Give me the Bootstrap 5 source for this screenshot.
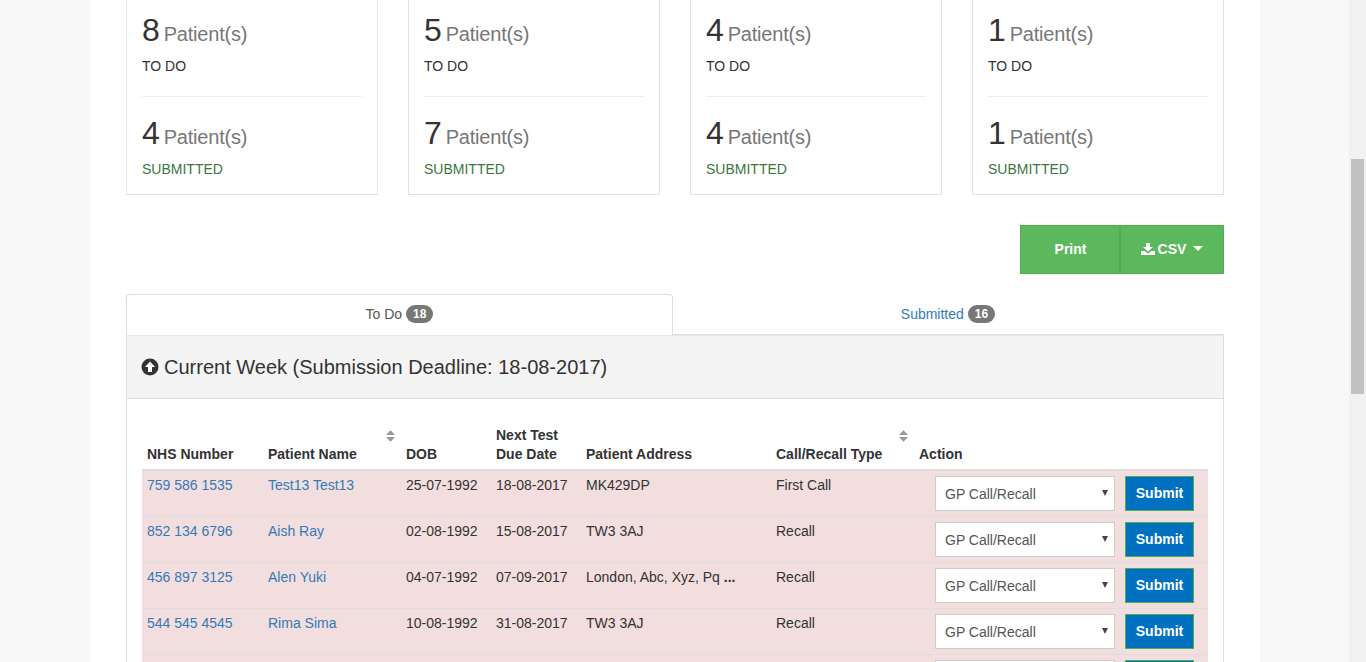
<!DOCTYPE html>
<html lang="en">
<head>
  <meta charset="UTF-8">
  <meta name="viewport" content="width=device-width, initial-scale=1.0">
  <title>Patient Recall</title>
  <link href="https://cdn.jsdelivr.net/npm/bootstrap@5.3.1/dist/css/bootstrap.min.css" rel="stylesheet">
  <style>
    html, body { height: 662px; overflow: hidden; }
    body { background-color: #f8f8f8; font-family: "Liberation Sans", Arial, sans-serif; font-size: 14px; color: #333; line-height: 20px; }
    a { color: #337ab7; text-decoration: none; }

    .page-area { width: 1349px; height: 662px; overflow: hidden; }
    .page-sheet { width: 1170px; height: 662px; margin-left: 90px; padding: 0 36px; background: #fff; overflow: hidden; }

    .fake-scroll { width: 17px; height: 662px; background: #f1f1f1; padding: 0 2px; }
    .fake-thumb { height: 235px; margin-top: 159px; background: #c1c1c1; }

    .stat-row { gap: 30px; }
    .stat-box { width: 252px; height: 195px; border: 1px solid #e3e3e3; border-top: 0; padding: 0 15px; }
    .stat-num { font-size: 32px; line-height: 33px; }
    .stat-unit { font-size: 20px; color: #777; letter-spacing: -0.2px; }
    .stat-first { padding-top: 14px; height: 97px; border-bottom: 1px solid #eee; }
    .stat-second { padding-top: 20px; }
    .stat-label { margin-top: 9px; }
    .stat-green { color: #3c763d; }

    .export-bar { margin-top: 30px; }
    .export-btn { height: 49px; padding: 0 0 2px; background: #5cb85c; border: 1px solid #4cae4c; border-radius: 0; color: #fff; font-weight: 700; font-size: 14px; }
    .export-print { width: 99px; padding-left: 1px; border-right-width: 0; }
    .export-csv { width: 105px; border-left-width: 2px; }
    .export-icon { margin-right: 3px; }
    .export-caret { width: 0; height: 0; border-left: 5px solid transparent; border-right: 5px solid transparent; border-top: 5px solid #fff; margin-left: 7px; }

    .tab-strip { margin-top: 20px; height: 41px; }
    .tab-item { height: 41px; display: flex; align-items: center; justify-content: center; gap: 4px; border-bottom: 1px solid #ddd; }
    .tab-on { width: 547px; border: 1px solid #ddd; border-bottom: 0; border-radius: 4px 4px 0 0; color: #555; padding-bottom: 2px; }
    .tab-off { width: 551px; padding-right: 1px; }
    .count-pill { background: #777; color: #fff; font-size: 12px; font-weight: 700; line-height: 12px; padding: 3px 7px; border-radius: 10px; }

    .week-panel { border: 1px solid #ddd; border-top: 0; }
    .week-head { height: 64px; background: #f4f4f4; border-top: 1px solid #e6e6e6; border-bottom: 1px solid #ddd; padding-left: 14px; gap: 5px; font-size: 20px; }
    .week-body { padding: 22px 15px 0; }

    .due-table { table-layout: fixed; width: 1066px; border-collapse: collapse; }
    .due-table th { position: relative; padding: 5px; line-height: 19px; font-weight: 700; vertical-align: bottom; border-bottom: 2px solid #ddd; }
    .due-table td { padding: 4px 5px 5px; height: 46px; background: #f2dede; border-top: 1px solid #ddd; vertical-align: top; }
    .due-table td.act-cell { padding-top: 5px; }
    .c-nhs { width: 121px; }
    .c-name { width: 138px; }
    .c-date { width: 90px; }
    .c-addr { width: 190px; }
    .c-type { width: 143px; }
    .c-act { width: 294px; }
    .sort-mark { position: absolute; right: 6px; top: 9px; }
    .row-actions { gap: 10px; padding-right: 9px; }
    .gp-select { width: 180px; height: 35px; padding: 5px 9px; border: 1px solid #ccc; background: #fff; color: #555; line-height: 25px; position: relative; }
    .gp-arrow { position: absolute; right: 6px; top: 13px; width: 0; height: 0; border-left: 3px solid transparent; border-right: 3px solid transparent; border-top: 6px solid #444; }
    .submit-btn { width: 69px; height: 35px; padding: 0 0 1px; background: #0070c0; border: 1px solid #4cae4c; border-radius: 0; color: #fff; font-weight: 700; font-size: 14px; }
    .addr-dots { font-weight: 700; }
  </style>
</head>
<body>
  <div class="d-flex">
    <div class="page-area">
      <div class="page-sheet">
        <!-- Stat boxes -->
        <div class="d-flex stat-row">
          <div class="stat-box">
            <div class="stat-first"><div><span class="stat-num">8</span> <span class="stat-unit">Patient(s)</span></div><div class="stat-label">TO DO</div></div>
            <div class="stat-second"><div><span class="stat-num">4</span> <span class="stat-unit">Patient(s)</span></div><div class="stat-label stat-green">SUBMITTED</div></div>
          </div>
          <div class="stat-box">
            <div class="stat-first"><div><span class="stat-num">5</span> <span class="stat-unit">Patient(s)</span></div><div class="stat-label">TO DO</div></div>
            <div class="stat-second"><div><span class="stat-num">7</span> <span class="stat-unit">Patient(s)</span></div><div class="stat-label stat-green">SUBMITTED</div></div>
          </div>
          <div class="stat-box">
            <div class="stat-first"><div><span class="stat-num">4</span> <span class="stat-unit">Patient(s)</span></div><div class="stat-label">TO DO</div></div>
            <div class="stat-second"><div><span class="stat-num">4</span> <span class="stat-unit">Patient(s)</span></div><div class="stat-label stat-green">SUBMITTED</div></div>
          </div>
          <div class="stat-box">
            <div class="stat-first"><div><span class="stat-num">1</span> <span class="stat-unit">Patient(s)</span></div><div class="stat-label">TO DO</div></div>
            <div class="stat-second"><div><span class="stat-num">1</span> <span class="stat-unit">Patient(s)</span></div><div class="stat-label stat-green">SUBMITTED</div></div>
          </div>
        </div>

        <!-- Export buttons -->
        <div class="d-flex justify-content-end export-bar">
          <button class="export-btn export-print" type="button">Print</button>
          <button class="export-btn export-csv d-flex align-items-center justify-content-center" type="button">
            <svg class="export-icon" width="14" height="12" viewBox="0 0 14 12"><path fill="#fff" d="M5 0h4v4h3L7 8.500 2 4h3zM0 8h3.500L7 10.500 10.500 8H14v4H0z"/></svg>CSV<span class="export-caret"></span>
          </button>
        </div>

        <!-- Tabs -->
        <div class="d-flex tab-strip">
          <div class="tab-item tab-on">To Do <span class="count-pill">18</span></div>
          <div class="tab-item tab-off"><a href="#">Submitted</a> <span class="count-pill">16</span></div>
        </div>

        <div class="week-panel">
          <div class="week-head d-flex align-items-center">
            <svg width="18" height="18" viewBox="0 0 18 18"><circle cx="9" cy="9" r="8.500" fill="#333"/><path fill="#fff" d="M9 3.500 14 9h-3v5H7V9H4z"/></svg>
            Current Week (Submission Deadline: 18-08-2017)
          </div>
          <div class="week-body">
            <table class="due-table">
              <thead>
                <tr>
                  <th class="c-nhs">NHS Number</th>
                  <th class="c-name">Patient Name
                    <svg class="sort-mark" width="9" height="12" viewBox="0 0 10 13"><path fill="#999" d="M5 0l5 5.500H0zM0 7.500h10L5 13z"/></svg>
                  </th>
                  <th class="c-date">DOB</th>
                  <th class="c-date">Next Test<br>Due Date</th>
                  <th class="c-addr">Patient Address</th>
                  <th class="c-type">Call/Recall Type
                    <svg class="sort-mark" width="9" height="12" viewBox="0 0 10 13"><path fill="#999" d="M5 0l5 5.500H0zM0 7.500h10L5 13z"/></svg>
                  </th>
                  <th class="c-act">Action</th>
                </tr>
              </thead>
              <tbody>
                <tr>
                  <td><a href="#">759 586 1535</a></td><td><a href="#">Test13 Test13</a></td><td>25-07-1992</td><td>18-08-2017</td><td>MK429DP</td><td>First Call</td>
                  <td class="act-cell"><div class="d-flex justify-content-end row-actions"><div class="gp-select">GP Call/Recall<span class="gp-arrow"></span></div><button class="submit-btn" type="button">Submit</button></div></td>
                </tr>
                <tr>
                  <td><a href="#">852 134 6796</a></td><td><a href="#">Aish Ray</a></td><td>02-08-1992</td><td>15-08-2017</td><td>TW3 3AJ</td><td>Recall</td>
                  <td class="act-cell"><div class="d-flex justify-content-end row-actions"><div class="gp-select">GP Call/Recall<span class="gp-arrow"></span></div><button class="submit-btn" type="button">Submit</button></div></td>
                </tr>
                <tr>
                  <td><a href="#">456 897 3125</a></td><td><a href="#">Alen Yuki</a></td><td>04-07-1992</td><td>07-09-2017</td><td>London, Abc, Xyz, Pq <span class="addr-dots">...</span></td><td>Recall</td>
                  <td class="act-cell"><div class="d-flex justify-content-end row-actions"><div class="gp-select">GP Call/Recall<span class="gp-arrow"></span></div><button class="submit-btn" type="button">Submit</button></div></td>
                </tr>
                <tr>
                  <td><a href="#">544 545 4545</a></td><td><a href="#">Rima Sima</a></td><td>10-08-1992</td><td>31-08-2017</td><td>TW3 3AJ</td><td>Recall</td>
                  <td class="act-cell"><div class="d-flex justify-content-end row-actions"><div class="gp-select">GP Call/Recall<span class="gp-arrow"></span></div><button class="submit-btn" type="button">Submit</button></div></td>
                </tr>
                <tr>
                  <td></td><td></td><td></td><td></td><td></td><td></td>
                  <td class="act-cell"><div class="d-flex justify-content-end row-actions"><div class="gp-select"></div><button class="submit-btn" type="button"></button></div></td>
                </tr>
              </tbody>
            </table>
          </div>
        </div>
      </div>
    </div>
    <div class="fake-scroll"><div class="fake-thumb"></div></div>
  </div>
  <script src="https://cdn.jsdelivr.net/npm/bootstrap@5.3.1/dist/js/bootstrap.bundle.min.js"></script>
</body>
</html>
